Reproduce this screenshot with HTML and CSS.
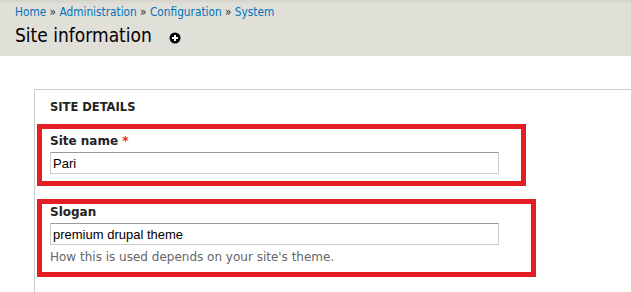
FILE: index.html
```html
<!DOCTYPE html>
<html lang="en">
<head>
    <meta charset="UTF-8">
    <title>Site information</title>
    <link rel="stylesheet" href="styles.css">
</head>
<body>
    <div class="branding">
        <div class="breadcrumb">
            <a href="#">Home</a> &raquo; <a href="#">Administration</a> &raquo; <a href="#">Configuration</a> &raquo; <a href="#">System</a>
        </div>
        <h1 class="page-title">Site information
            <a href="#" class="add-shortcut" title="Add to shortcuts">
                <svg width="12" height="12" viewBox="0 0 12 12">
                    <circle cx="6" cy="6" r="5.5" fill="#000"/>
                    <path d="M6 3v6M3 6h6" stroke="#fff" stroke-width="2"/>
                </svg>
            </a>
        </h1>
    </div>

    <div class="page">
        <div class="fieldset">
            <div class="legend">Site details</div>

            <div class="highlight highlight-name">
                <label for="site-name">Site name <span class="required">*</span></label>
                <input type="text" id="site-name" class="form-text" value="Pari">
            </div>

            <div class="highlight highlight-slogan">
                <label for="site-slogan">Slogan</label>
                <input type="text" id="site-slogan" class="form-text" value="premium drupal theme">
                <div class="description">How this is used depends on your site's theme.</div>
            </div>
        </div>
    </div>
</body>
</html>
```

FILE: styles.css
```css
body {
    margin: 0;
    background-color: #fff;
    font-family: "DejaVu Sans", sans-serif;
    color: #333;
}
.branding {
    height: 56px;
    box-sizing: border-box;
    padding: 4px 15px 0 15px;
    background: linear-gradient(#d3d2cb 0, #e0dfd8 4px, #e0dfd8 100%);
}
.breadcrumb {
    font-family: "DejaVu Sans Condensed", "DejaVu Sans", sans-serif;
    font-stretch: condensed;
    font-size: 11.75px;
    line-height: 16px;
    color: #333;
}
.breadcrumb a {
    color: #0074bd;
    text-decoration: none;
}
.page-title {
    margin: 2px 0 0 0;
    font-family: "DejaVu Sans Condensed", "DejaVu Sans", sans-serif;
    font-stretch: condensed;
    font-size: 19px;
    font-weight: normal;
    line-height: 26px;
    color: #000;
}
.add-shortcut {
    display: inline-block;
    margin-left: 12px;
    vertical-align: -2px;
}
.page {
    padding: 33px 0 0 34px;
}
.fieldset {
    border: 1px solid #ccc;
    border-right: none;
    border-bottom: none;
    height: 202px;
}
.legend {
    padding: 9px 0 0 15px;
    font-size: 11.5px;
    font-weight: bold;
    line-height: 16px;
    text-transform: uppercase;
    color: #222;
    margin-bottom: 9px;
}
.highlight {
    margin-left: 2px;
    border: 5px solid #e31e24;
    padding: 0 8px;
    box-sizing: border-box;
}
.highlight-name {
    width: 489px;
    height: 62px;
    padding-top: 4px;
}
.highlight-slogan {
    width: 499px;
    height: 78px;
    margin-top: 13px;
    padding-top: 0;
}
label {
    display: block;
    font-size: 12px;
    font-weight: bold;
    line-height: 16px;
    color: #222;
    margin-bottom: 3px;
}
.required {
    color: #e31e24;
}
.form-text {
    display: block;
    width: 449px;
    height: 22px;
    box-sizing: border-box;
    margin: 0;
    padding: 2px 2px;
    border: 1px solid #ccc;
    border-top-color: #999;
    font-family: "Liberation Sans", Arial, sans-serif;
    font-size: 13px;
    color: #000;
}
.description {
    margin-top: 5px;
    font-size: 12px;
    line-height: 15px;
    color: #666;
}
```
